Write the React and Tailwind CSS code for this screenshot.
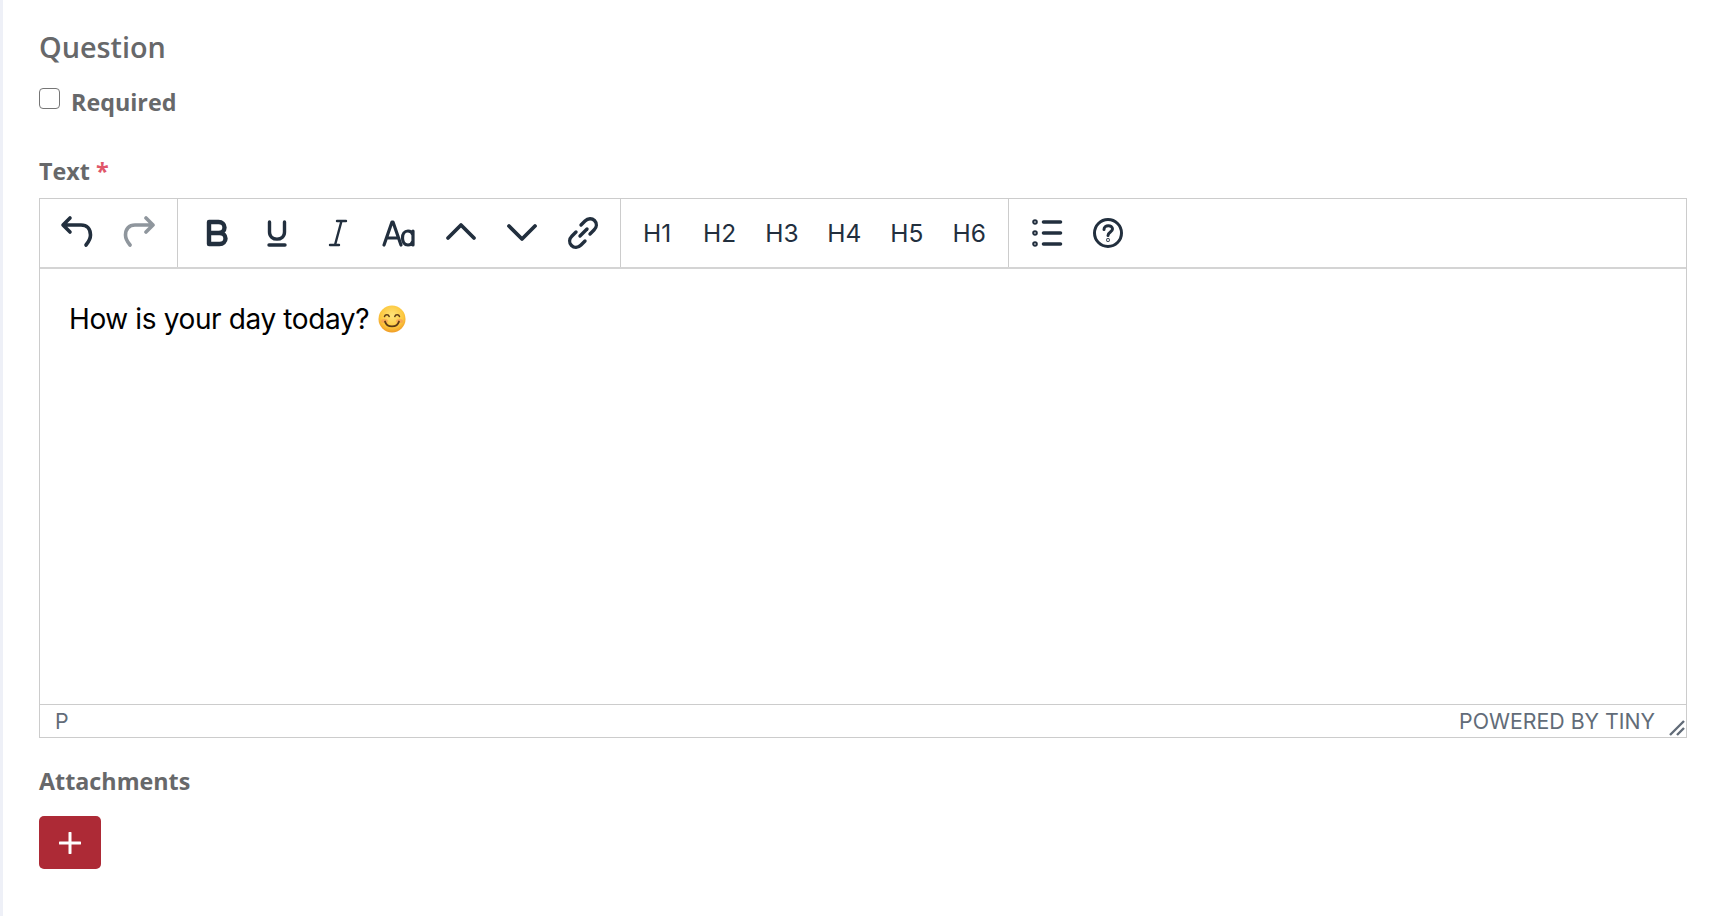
const iconClass = "w-[36px] h-[36px] fill-none stroke-[#222f3e] [stroke-linecap:round] [stroke-linejoin:round]";

const ToolButton = ({ children, width = "w-[61px]" }) => (
  <button type="button" className={`${width} h-[52px] flex items-center justify-center shrink-0`}>
    {children}
  </button>
);

const Icon = ({ children, className = "" }) => (
  <svg viewBox="0 0 36 36" className={`${iconClass} ${className}`}>
    {children}
  </svg>
);

const Heading = ({ label }) => (
  <ToolButton width="w-[62.4px]">
    <span className="text-[24.5px] text-[#222f3e] leading-none">{label}</span>
  </ToolButton>
);

const Smile = () => (
  <svg viewBox="0 0 28 28" className="w-[28px] h-[28px] ml-[9px] shrink-0">
    <defs>
      <radialGradient id="face" cx="50%" cy="38%" r="65%">
        <stop offset="0%" stopColor="#ffe47a" />
        <stop offset="65%" stopColor="#fcc83f" />
        <stop offset="100%" stopColor="#ee9420" />
      </radialGradient>
    </defs>
    <circle cx="14" cy="14" r="13.5" fill="url(#face)" />
    <ellipse cx="6.5" cy="16" rx="3.4" ry="2" fill="#f6905a" opacity="0.6" />
    <ellipse cx="21.5" cy="16" rx="3.4" ry="2" fill="#f6905a" opacity="0.6" />
    <path d="M6.5 11.5c.7-2.4 4-2.4 4.700 0M16.800 11.500c.7-2.400 4-2.400 4.700 0" fill="none" stroke="#5b3a16" strokeWidth="1.5" strokeLinecap="round" />
    <path d="M7 16.500c1.800 6.500 12.200 6.500 14 0" fill="none" stroke="#5b3a16" strokeWidth="1.800" strokeLinecap="round" />
  </svg>
);

export default function App() {
  return (
    <div className="w-[1714px] h-[916px] bg-white border-l-[3px] border-[#eef0f7] overflow-hidden font-['Open_Sans',sans-serif] text-[#67686a]">
      <div className="pl-[36px] pr-[27px] pt-[27px]">
        <h2 className="text-[28.8px] leading-[40px] font-semibold">Question</h2>

        <label className="flex items-start mt-[20px] h-[30px]">
          <span className="w-[21px] h-[21px] mt-[1px] rounded-[4px] border-[1.5px] border-[#767676] bg-white shrink-0" />
          <span className="ml-[11px] text-[23.3px] leading-[30px] font-bold">Required</span>
        </label>

        <div className="mt-[39px] h-[30px] text-[23.3px] leading-[30px] font-bold">
          Text <span className="text-[#e0566a]">*</span>
        </div>

        {/* Editor */}
        <div className="mt-[12px] h-[540px] border border-[#cccccc] flex flex-col font-['Inter',sans-serif]">
          <div className="h-[70px] shrink-0 flex items-stretch border-b-2 border-[#d4d4d4]">
            <div className="w-[138px] pl-[6px] flex items-center border-r border-[#cccccc]">
              <ToolButton>
                <Icon className="stroke-[3.6]">
                  <path d="M11 3 4 10l7 7M5 10h17c6 0 9.500 4 9.500 10 0 4-2 7-4.500 10" />
                </Icon>
              </ToolButton>
              <ToolButton>
                <div className="ml-[3px]">
                  <Icon className="stroke-[3.6] opacity-50">
                    <path d="M25 3l7 7-7 7M31 10H14C8 10 4.500 14 4.500 20c0 4 2 7 4.500 10" />
                  </Icon>
                </div>
              </ToolButton>
            </div>

            <div className="w-[443px] pl-[8px] flex items-center border-r border-[#cccccc]">
              <ToolButton>
                <Icon className="stroke-[4.4]">
                  <path d="M10 7h9.500c3.600 0 6 2.300 6 5.500S23 18 19.500 18H10zM10 18h10.500c3.600 0 6 2.500 6 5.500s-2.400 5.500-6 5.500H10z" />
                </Icon>
              </ToolButton>
              <ToolButton>
                <div className="-ml-[2px]">
                  <Icon className="stroke-[3.4]">
                    <path d="M10.500 7v10c0 9.500 15 9.500 15 0V7" />
                    <path d="M10 30h16" />
                  </Icon>
                </div>
              </ToolButton>
              <ToolButton>
                <div className="-ml-[3px]">
                  <Icon className="stroke-[2.4] [stroke-linecap:butt]">
                    <path d="M18 6h9M11 30h9M22.500 6 16 30" />
                  </Icon>
                </div>
              </ToolButton>
              <ToolButton>
                <div className="-ml-[2px]">
                  <Icon className="stroke-[3.2]">
                    <path d="M3 30 11 7h1l8 23M6 23h11" />
                    <path d="M32 16v14M32 20c-1-3-3-4-5-4-3.500 0-5.500 3-5.500 7s2 7 5.500 7c2 0 4-1 5-4" />
                  </Icon>
                </div>
              </ToolButton>
              <ToolButton>
                <Icon className="stroke-[3.8]">
                  <path d="M5 23 18 10l13 13" />
                </Icon>
              </ToolButton>
              <ToolButton>
                <Icon className="stroke-[3.8]">
                  <path d="M5 11l13 13 13-13" />
                </Icon>
              </ToolButton>
              <ToolButton>
                <Icon className="stroke-[3.4]">
                  <path d="M15 21l7-7" />
                  <path d="M16 10l4-4c3-3 7-3 9.500-.500S32 12 29 15l-4 4" />
                  <path d="M20 26l-4 4c-3 3-7 3-9.500.500S4 24 7 21l4-4" />
                </Icon>
              </ToolButton>
            </div>

            <div className="w-[388px] pl-[5px] flex items-center border-r border-[#cccccc]">
              <Heading label="H1" />
              <Heading label="H2" />
              <Heading label="H3" />
              <Heading label="H4" />
              <Heading label="H5" />
              <Heading label="H6" />
            </div>

            <div className="pl-[7px] flex items-center">
              <ToolButton>
                <Icon className="stroke-[3.6]">
                  <path d="M14.500 7h17M14.500 18h17M14.500 29h17" />
                  <circle cx="6" cy="7" r="1" />
                  <circle cx="6" cy="18" r="1" />
                  <circle cx="6" cy="29" r="1" />
                </Icon>
              </ToolButton>
              <ToolButton>
                <Icon className="stroke-[3]">
                  <circle cx="18" cy="18" r="13.500" />
                  <path d="M14 14.500c0-5 8.500-5 8.500-.500 0 3-4.500 3-4.500 6.500" />
                  <circle cx="18" cy="25" r="0.400" />
                </Icon>
              </ToolButton>
            </div>
          </div>

          <div className="flex-1 pl-[29px] pt-[32px]">
            <p className="flex items-center h-[36px] text-[28px] tracking-[-0.38px] text-black leading-[36px]">
              How is your day today?
              <Smile />
            </p>
          </div>

          <div className="h-[33px] shrink-0 border-t border-[#cccccc] relative flex items-center justify-between pl-[15px] pr-[31px] pt-[1px] text-[21.3px] text-[#626c78]">
            <span>P</span>
            <span>POWERED BY TINY</span>
            <svg viewBox="0 0 16 16" className="absolute right-[1px] bottom-[1px] w-[16px] h-[16px] fill-none stroke-[#626c78] stroke-[2.4]">
              <path d="M1 15 15 1M8 15l7-7" />
            </svg>
          </div>
        </div>

        <div className="mt-[28px] h-[30px] text-[23.3px] leading-[30px] font-bold">Attachments</div>

        <button type="button" className="mt-[20px] w-[62px] h-[53px] rounded-[5px] bg-[#ad2a36] flex items-center justify-center">
          <svg viewBox="0 0 22 22" className="w-[22px] h-[22px] fill-none stroke-white stroke-[3] [stroke-linecap:round]">
            <path d="M11 1v20M1 11h20" />
          </svg>
        </button>
      </div>
    </div>
  );
}
